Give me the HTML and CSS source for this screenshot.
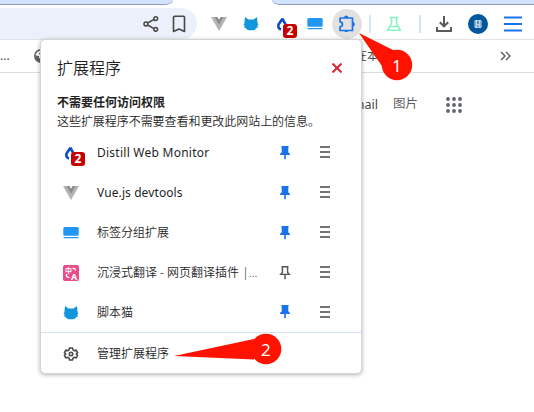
FILE: index.html
```html
<!DOCTYPE html>
<html lang="zh-CN">
<head>
<meta charset="utf-8">
<title>扩展程序</title>
<link rel="stylesheet" href="styles.css">
</head>
<body>
<svg class="defs" aria-hidden="true">
  <symbol id="vue" viewBox="0 0 16 16"><path fill="#b4b4b4" d="M0 1h3.600L8 8.700 12.400 1H16L8 15z"/><path fill="#8a8a8a" d="M3.400 1h3L8 3.700 9.600 1h3L8 9z"/></symbol>
  <symbol id="cat" viewBox="0 0 16 16"><path fill="#1296db" d="M2 1L5.500 3.500H10.500L14 1L14.600 7.500L15.300 8V9L14.400 9.300V10.300L15.200 11V11.600H13.800Q12.800 13.700 10.500 14.300H5.500Q3.200 13.700 2.200 11.600H.8V11L1.600 10.300V9.300L.7 9V8L1.400 7.500Z"/></symbol>
  <symbol id="drop" viewBox="0 0 16 16"><path fill="none" stroke="#0b4fc8" stroke-width="2.600" stroke-linejoin="round" d="M7.600 2.500C6.500 5 3.300 7.300 3.300 10c0 1.800 1 3 2.700 3.400M7.600 2.500C8 4.800 9.600 6.500 10.600 8.500"/></symbol>
  <symbol id="panel" viewBox="0 0 16 16"><rect x=".3" y="2" width="15.400" height="8.800" rx="1.500" fill="#2196f3"/><rect x="0.500" y="12" width="15" height="1.300" rx=".5" fill="#2196f3"/></symbol>
  <symbol id="pin" viewBox="0 0 12 16"><path fill="#1a73e8" d="M2.400 1h7.200v1.200l-.3.300v4.800l1.700 1.600V10H6.800v4.300H5.200V10H1V8.900l1.700-1.600V2.500l-.3-.3z"/></symbol>
  <symbol id="pin-line" viewBox="0 0 12 16"><path fill="none" stroke="#555" stroke-width="1.400" d="M2.500 1.700h7M3.400 2v5.400L1.700 9.400h8.600L8.600 7.400V2M6 9.500v4.800"/></symbol>
  <symbol id="menu" viewBox="0 0 10 14"><path stroke="#747474" stroke-width="2" d="M0 2h10M0 7h10M0 12h10"/></symbol>
</svg>

<div class="tabs"><div class="tab tab-left"></div><div class="tab tab-right"></div></div>

<div class="toolbar">
  <div class="omnibox">
    <svg width="16" height="16" viewBox="0 0 16 16" fill="none" stroke="#474747" stroke-width="1.500"><path d="M4.500 7l6.500-3.700M4.500 9l6.500 3.700"/><circle cx="2.900" cy="8" r="1.900"/><circle cx="12.700" cy="2.700" r="1.900"/><circle cx="12.700" cy="13.300" r="1.900"/></svg>
    <svg width="14" height="18" viewBox="0 0 14 18" fill="none" stroke="#474747" stroke-width="1.600" stroke-linejoin="round"><path d="M1.500 16.500V2.500q0-1.200 1.200-1.200h8.600q1.200 0 1.200 1.200v14L7 14z"/></svg>
  </div>
  <div class="extensions">
    <svg class="ext"><use href="#vue"/></svg>
    <svg class="ext"><use href="#cat"/></svg>
    <span class="ext badged"><svg class="ext"><use href="#drop"/></svg><b class="badge">2</b></span>
    <svg class="ext"><use href="#panel"/></svg>
  </div>
  <div class="puzzle"><svg width="18" height="18" viewBox="0 0 18 18"><path fill="none" stroke="#1a73e8" stroke-width="1.700" stroke-linejoin="round" d="M2 3h12.500v12.500H2v-3.700q2.500-.2 2.500-2.500T2 6.800z"/><path fill="#1a73e8" d="M6 3q0-2.400 2.200-2.400T10.400 3zM14.500 7q2.400 0 2.400 2.200t-2.400 2.200zM6 15.500h4.400q-.3 1.500-2.200 1.500T6 15.500z"/></svg></div>
  <span class="divider"></span>
  <svg class="flask" width="16" height="16" viewBox="0 0 16 16" fill="none" stroke="#86f4c2" stroke-width="1.500" stroke-linejoin="round"><path d="M3.500 1.500h9M5.500 2v5.300L1.500 14.300h13L10.500 7.300V2M4 10.500h8"/></svg>
  <span class="divider second"></span>
  <svg class="download" width="18" height="18" viewBox="0 0 18 18" fill="none" stroke="#5a5a5a" stroke-width="2"><path d="M9 1v10M4.800 7.200L9 11.300l4.200-4.100M2 12v4h14v-4"/></svg>
  <svg class="avatar" width="20" height="20" viewBox="0 0 20 20"><circle cx="10" cy="10" r="10" fill="#00579b"/><path fill="none" stroke="#c9dcec" stroke-width=".9" d="M7 6.500h6v7H7zM6.500 8h7M8.500 6v8M11.500 6v8M7 10h6M6.500 12h7M7.500 13.500L10 10l2.500 3.500"/></svg>
  <svg class="hamburger" width="18" height="16" viewBox="0 0 18 16"><path stroke="#1a73e8" stroke-width="1.800" d="M0 1.500h18M0 8h18M0 14.500h18"/></svg>
</div>

<div class="bookmarks">
  <span class="ellipsis">...</span>
  <svg class="globe" width="14" height="14" viewBox="0 0 14 14"><circle cx="7" cy="7" r="6.200" fill="#fff" stroke="#5f6368" stroke-width="1.500"/><path fill="#5f6368" d="M1 6q2 1 4 1v2l3 1v3.500Q1 13 1 6zM6 1v2.500L4.500 5 8 6l5-2Q11 0 6 1z"/></svg>
  <span class="bookmark">正在本地</span>
  <svg class="more" width="11" height="10" viewBox="0 0 11 10" fill="none" stroke="#5f6368" stroke-width="1.500"><path d="M1 1l4 4-4 4M6 1l4 4-4 4"/></svg>
</div>

<div class="page">
  <span class="gmail">Gmail</span><span class="images">图片</span>
  <svg width="16" height="16" viewBox="0 0 16 16" fill="#5f6368"><circle cx="2" cy="2" r="1.900"/><circle cx="8" cy="2" r="1.900"/><circle cx="14" cy="2" r="1.900"/><circle cx="2" cy="8" r="1.900"/><circle cx="8" cy="8" r="1.900"/><circle cx="14" cy="8" r="1.900"/><circle cx="2" cy="14" r="1.900"/><circle cx="8" cy="14" r="1.900"/><circle cx="14" cy="14" r="1.900"/></svg>
</div>

<div class="popup">
  <div class="head"><span>扩展程序</span><svg width="10" height="10" viewBox="0 0 10 10" stroke="#dc2430" stroke-width="2"><path d="M.5.500l9 9M9.500.500l-9 9"/></svg></div>
  <div class="access"><b>不需要任何访问权限</b><p>这些扩展程序不需要查看和更改此网站上的信息。</p></div>
  <div class="row"><span class="ext badged"><svg class="ext"><use href="#drop"/></svg><b class="badge">2</b></span><span class="name latin distill">Distill Web Monitor</span><svg class="pin"><use href="#pin"/></svg><svg class="menu"><use href="#menu"/></svg></div>
  <div class="row"><svg class="ext"><use href="#vue"/></svg><span class="name latin">Vue.js devtools</span><svg class="pin"><use href="#pin"/></svg><svg class="menu"><use href="#menu"/></svg></div>
  <div class="row"><svg class="ext"><use href="#panel"/></svg><span class="name">标签分组扩展</span><svg class="pin"><use href="#pin"/></svg><svg class="menu"><use href="#menu"/></svg></div>
  <div class="row"><span class="ext translate"><i>中</i><i>A</i><svg width="16" height="16" viewBox="0 0 16 16" fill="none" stroke="#fff" stroke-width="1.300"><path d="M9.500 3.500h1.500q1.500 0 1.500 2M3.500 9v1.500q0 1.800 2 1.800h1"/></svg></span><span class="name">沉浸式翻译 - 网页翻译插件 |...</span><svg class="pin"><use href="#pin-line"/></svg><svg class="menu"><use href="#menu"/></svg></div>
  <div class="row last"><svg class="ext"><use href="#cat"/></svg><span class="name">脚本猫</span><svg class="pin"><use href="#pin"/></svg><svg class="menu"><use href="#menu"/></svg></div>
  <div class="row manage"><svg class="ext" viewBox="0 0 16 16" fill="none" stroke="#4a4a4a" stroke-width="1.600" stroke-linejoin="round"><path d="M6.500 2h3l.5 1.900 1.300.8 1.900-.6 1.400 2.500-1.400 1.400 1.400 1.400-1.400 2.500-1.900-.6-1.300.8-.5 1.900h-3L6 12.100l-1.300-.8-1.900.6-1.400-2.500L2.800 8 1.400 6.600l1.400-2.500 1.900.6L6 3.900z"/><circle cx="8" cy="8" r="1.700"/></svg><span class="name">管理扩展程序</span></div>
</div>

<div class="callout one"><svg width="54" height="49" viewBox="0 0 54 49" fill="#ff1200"><path d="M0 0l35 17.500L25 36z"/><circle cx="38" cy="32" r="15.200"/></svg><span>1</span></div>
<div class="callout two"><svg width="108" height="32" viewBox="0 0 108 32" fill="#ff1200"><path d="M0 23L80 6v20.500z"/><circle cx="92" cy="16" r="15.300"/></svg><span>2</span></div>
</body>
</html>
```
FILE: styles.css
```css
* { box-sizing: border-box; }
body {
  margin: 0;
  width: 534px;
  height: 412px;
  overflow: hidden;
  position: relative;
  background: #fff;
  color: #1f1f1f;
  font: 350 12px/16px "Noto Sans", "Noto Sans CJK SC", sans-serif;
}
svg { display: block; flex: none; }
.defs { position: absolute; width: 0; height: 0; }

.tabs { display: flex; justify-content: space-between; height: 5px; }
.tab { background: #d3e3fd; border-bottom: 1px solid #8e9fbd; }
.tab-left { width: 173px; border-bottom-right-radius: 8px 5px; }
.tab-right { width: 262px; border-bottom-left-radius: 8px 5px; }

.toolbar { display: flex; align-items: center; height: 35px; padding-top: 3px; border-bottom: 1px solid #e1e3e6; }
.omnibox {
  display: flex;
  align-items: center;
  justify-content: flex-end;
  gap: 13px;
  width: 197px;
  height: 31px;
  padding-right: 11px;
  border-radius: 0 16px 16px 0;
  background: #ebf0fa;
}
.extensions { display: flex; gap: 16px; margin-left: 14px; }
.ext { display: block; flex: none; width: 16px; height: 16px; }
.badged { position: relative; }
.badge {
  position: absolute;
  left: 8px;
  top: 8px;
  width: 14px;
  height: 14px;
  border-radius: 3px;
  background: #c60000;
  color: #fff;
  font: bold 12px/14px "Noto Sans", sans-serif;
  text-align: center;
}
.puzzle { display: flex; align-items: center; justify-content: center; width: 30px; height: 30px; margin-left: 9px; border-radius: 50%; background: #e1e1e1; }
.divider { width: 2px; height: 18px; margin-left: 7px; background: #d3e3fd; }
.flask { margin-left: 15px; }
.second { margin-left: 17px; }
.download { margin-left: 14px; }
.avatar { margin-left: 15px; }
.hamburger { margin-left: 16px; }

.bookmarks { display: flex; align-items: center; height: 33px; border-bottom: 1px solid #dadce0; color: #474747; font-weight: 400; }
.ellipsis { width: 34px; }
.bookmark { margin-left: 295px; width: 60px; }
.more { margin-left: 97px; }

.page { display: flex; align-items: center; height: 64px; color: #5f5f5f; font-weight: 400; font-size: 12.5px; }
.gmail { width: 378px; text-align: right; color: #474747; }
.images { margin: 0 28px 2px 15px; }

.popup {
  position: absolute;
  left: 40px;
  top: 39px;
  width: 322px;
  height: 335px;
  border: 1px solid #d4d4d4;
  border-radius: 5px;
  background: #fff;
  box-shadow: 0 1px 4px rgba(0, 0, 0, .3);
}
.head { display: flex; align-items: center; justify-content: space-between; height: 54px; padding: 1px 19px 0 16px; font-size: 16px; }
.access { height: 39px; padding-left: 16px; line-height: 20px; }
.access b { display: block; line-height: 18px; }
.access p { margin: 0; letter-spacing: -.05px; }
.row { display: flex; align-items: center; height: 40px; padding-left: 22px; }
.row .badge { top: 7px; }
.name { width: 181px; margin-left: 18px; white-space: nowrap; }
.latin { font-weight: 400; letter-spacing: .1px; }
.distill { letter-spacing: .25px; }
.pin { width: 12px; height: 16px; margin: 0 0 1px 1px; }
.menu { width: 10px; height: 14px; margin: 0 0 2px 29px; }
.last { height: 39px; }
.manage { height: 42px; border-top: 1px solid #d3e0f6; }
.translate { position: relative; border-radius: 2px; background: #ea4c89; color: #fff; }
.translate i { position: absolute; left: 2px; top: 1px; font: bold 7px/8px "Noto Sans CJK SC", sans-serif; }
.translate i + i { left: 8px; top: 7px; font: bold 9px/9px "Noto Sans", sans-serif; }

.callout { position: absolute; color: #fff; font: 17px/20px "Noto Sans", sans-serif; }
.callout span { position: absolute; }
.one { left: 359px; top: 33px; }
.one span { left: 33px; top: 23px; }
.two { left: 174px; top: 333px; }
.two span { left: 87px; top: 7px; }
```
